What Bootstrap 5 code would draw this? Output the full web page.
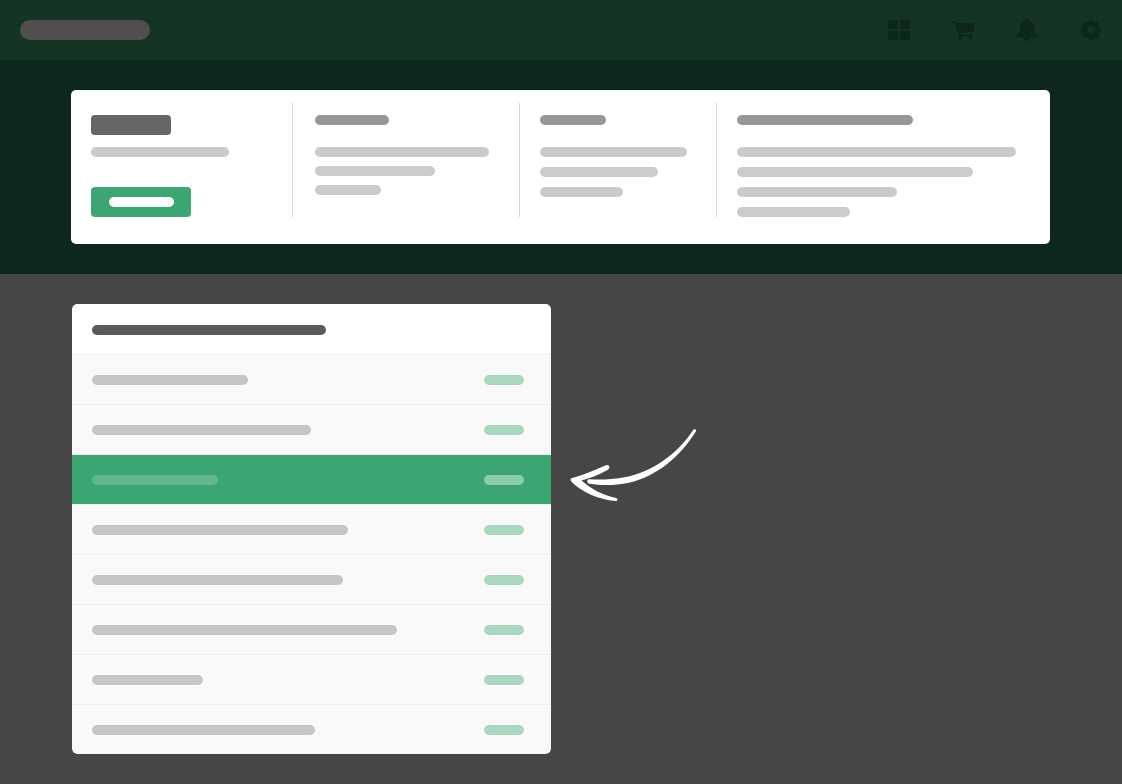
<!DOCTYPE html>
<html lang="en">
<head>
<meta charset="utf-8">
<meta name="viewport" content="width=device-width, initial-scale=1">
<title>Dashboard</title>
<link href="https://cdn.jsdelivr.net/npm/bootstrap@5.3.0/dist/css/bootstrap.min.css" rel="stylesheet">
<style>
body{background:#464646;font-family:"Liberation Sans",sans-serif}
.topbar{background:#143424;height:60px;padding-left:20px}
.brand-pill{width:130px;height:20px;background:#504e4e}
.tool{width:64px;height:60px;color:#0d271c;border-left:1px solid #183324;border-radius:0}
.tool:hover{color:#0a1f16}
.hero{background:#0d271c;padding:30px 72px 30px 71px}
.panel{border-radius:5px;padding:13px 0 27px}
.panel-grid{display:grid;grid-template-columns:222fr 227fr 197fr 333fr}
.panel-col{height:114px;padding:12px 20px 0;border-right:1px solid #d8d8d8}
.panel-col:last-child{border-right:0}
.panel-col.wide{padding-left:22px}
.line{height:10px;border-radius:5px;background:#cbcbcb;flex:none}
.line.head{background:#979797;margin-bottom:22px}
.stack{display:flex;flex-direction:column;gap:10px}
.stack.tight{gap:9px}
.name-block{width:80px;height:20px;border-radius:4px;background:#666}
.btn-go{width:100px;height:30px;border-radius:4px;background:#3ca673}
.btn-go:hover{background:#359768}
.btn-go .line{background:#fff}
.page{padding:30px 72px}
.page .row{--bs-gutter-x:20px}
.rows{border-radius:5px;overflow:hidden}
.rows .list-group-item{height:50px;padding:20px 27px 0 20px;border:0;border-top:1px solid #ededed;background:#f9f9f9}
.rows .list-group-item.title{background:#fff;border-top-color:#fff}
.rows .list-group-item.active{background:#3ca673;margin-top:0}
.rows .line{background:#c6c6c6}
.rows .title .line{background:#5a5a5a}
.rows .line.tag{width:40px;background:#a9d8c1}
.rows .active .line{background:#63b88f}
.rows .active .line.tag{background:#8acbac}
.pointer{padding-top:120px}
</style>
</head>
<body>
<nav class="topbar d-flex align-items-center justify-content-between" aria-label="Main">
  <a href="#" class="brand-pill rounded-pill d-block" aria-label="Home"></a>
  <div class="d-flex">
    <button type="button" class="tool btn border-end-0 border-top-0 border-bottom-0 p-0" aria-label="Apps">
      <svg width="24" height="24" viewBox="0 0 24 24" fill="currentColor"><rect x="1" y="2" width="10" height="9" rx="1"/><rect x="13" y="2" width="10" height="9" rx="1"/><rect x="1" y="13" width="10" height="9" rx="1"/><rect x="13" y="13" width="10" height="9" rx="1"/></svg>
    </button>
    <button type="button" class="tool btn border-end-0 border-top-0 border-bottom-0 p-0" aria-label="Cart">
      <svg width="24" height="24" viewBox="0 0 24 24" fill="currentColor"><path d="M1 3h4.500l1 2H23v8.500L8.500 15l.4 1.500H21V18H7.500L4.200 5H1z"/><circle cx="9.500" cy="20" r="2"/><circle cx="19.500" cy="20" r="2"/></svg>
    </button>
    <button type="button" class="tool btn border-end-0 border-top-0 border-bottom-0 p-0" aria-label="Notifications">
      <svg width="24" height="24" viewBox="0 0 24 24" fill="currentColor"><path d="M12 0.500a2 2 0 0 1 2 2C17.500 3.500 19 6 19 9c0 5 1.500 7 4 9v1.500H1V18c2.500-2 4-4 4-9 0-3 1.500-5.500 5-6.500a2 2 0 0 1 2-2zM9 20h6a3 3 0 0 1-6 0z"/></svg>
    </button>
    <button type="button" class="tool btn border-end-0 border-top-0 border-bottom-0 p-0" aria-label="Settings">
      <svg width="24" height="24" viewBox="0 0 24 24" fill="none" stroke="currentColor"><circle cx="12" cy="12" r="6" stroke-width="5"/><g stroke-width="4.500"><path d="M12 2v4M12 18v4M2 12h4M18 12h4M4.900 4.900l2.900 2.900M16.200 16.200l2.900 2.900M19.100 4.900l-2.900 2.900M7.800 16.200l-2.900 2.900"/></g></svg>
    </button>
  </div>
</nav>

<section class="hero">
  <div class="panel bg-white">
    <div class="panel-grid">
      <div class="panel-col">
        <div class="name-block"></div>
        <div class="line" style="width:138px;margin-top:12px"></div>
        <button type="button" class="btn btn-go border-0 p-0 d-flex align-items-center justify-content-center" style="margin-top:30px" aria-label="Continue"><span class="line" style="width:65px"></span></button>
      </div>
      <div class="panel-col wide">
        <div class="line head" style="width:74px"></div>
        <div class="stack tight">
          <div class="line" style="width:174px"></div>
          <div class="line" style="width:120px"></div>
          <div class="line" style="width:66px"></div>
        </div>
      </div>
      <div class="panel-col">
        <div class="line head" style="width:66px"></div>
        <div class="stack">
          <div class="line" style="width:147px"></div>
          <div class="line" style="width:118px"></div>
          <div class="line" style="width:83px"></div>
        </div>
      </div>
      <div class="panel-col">
        <div class="line head" style="width:176px"></div>
        <div class="stack">
          <div class="line" style="width:279px"></div>
          <div class="line" style="width:236px"></div>
          <div class="line" style="width:160px"></div>
          <div class="line" style="width:113px"></div>
        </div>
      </div>
    </div>
  </div>
</section>

<main class="page">
  <div class="row">
    <div class="col-6">
      <ul class="rows list-group">
        <li class="list-group-item title"><div class="line" style="width:234px"></div></li>
        <li class="list-group-item d-flex justify-content-between"><div class="line" style="width:156px"></div><div class="line tag"></div></li>
        <li class="list-group-item d-flex justify-content-between"><div class="line" style="width:219px"></div><div class="line tag"></div></li>
        <li class="list-group-item d-flex justify-content-between active"><div class="line" style="width:126px"></div><div class="line tag"></div></li>
        <li class="list-group-item d-flex justify-content-between"><div class="line" style="width:256px"></div><div class="line tag"></div></li>
        <li class="list-group-item d-flex justify-content-between"><div class="line" style="width:251px"></div><div class="line tag"></div></li>
        <li class="list-group-item d-flex justify-content-between"><div class="line" style="width:305px"></div><div class="line tag"></div></li>
        <li class="list-group-item d-flex justify-content-between"><div class="line" style="width:111px"></div><div class="line tag"></div></li>
        <li class="list-group-item d-flex justify-content-between"><div class="line" style="width:223px"></div><div class="line tag"></div></li>
      </ul>
    </div>
    <div class="col-6 pointer">
      <svg class="d-block overflow-visible" width="130" height="84" viewBox="11 4 130 84" fill="#fff" aria-hidden="true">
        <path d="M29 59.200C39 60 51 59.700 63 57.600C93 52 117 34 133 10.200C134.200 8.200 137 9.300 135.800 11.400C120 37 96 56.500 69 62.700C55 65.700 41 65.500 29.500 63.700C26.800 63.200 26.500 59.300 29 59.200Z"/>
        <path d="M11.500 58.300C24 55 35 49.500 46 45.200C49.200 44.200 50.700 48 48 49.800C39 55 30 58 21.500 60.600C31 69 43 75.500 56 78C58.300 78.700 57.600 81.300 55.500 81C38 79.500 22 72 11.700 62C10.200 60.600 10.300 58.700 11.500 58.300Z"/>
      </svg>
    </div>
  </div>
</main>
<script src="https://cdn.jsdelivr.net/npm/bootstrap@5.3.0/dist/js/bootstrap.bundle.min.js"></script>
</body>
</html>
